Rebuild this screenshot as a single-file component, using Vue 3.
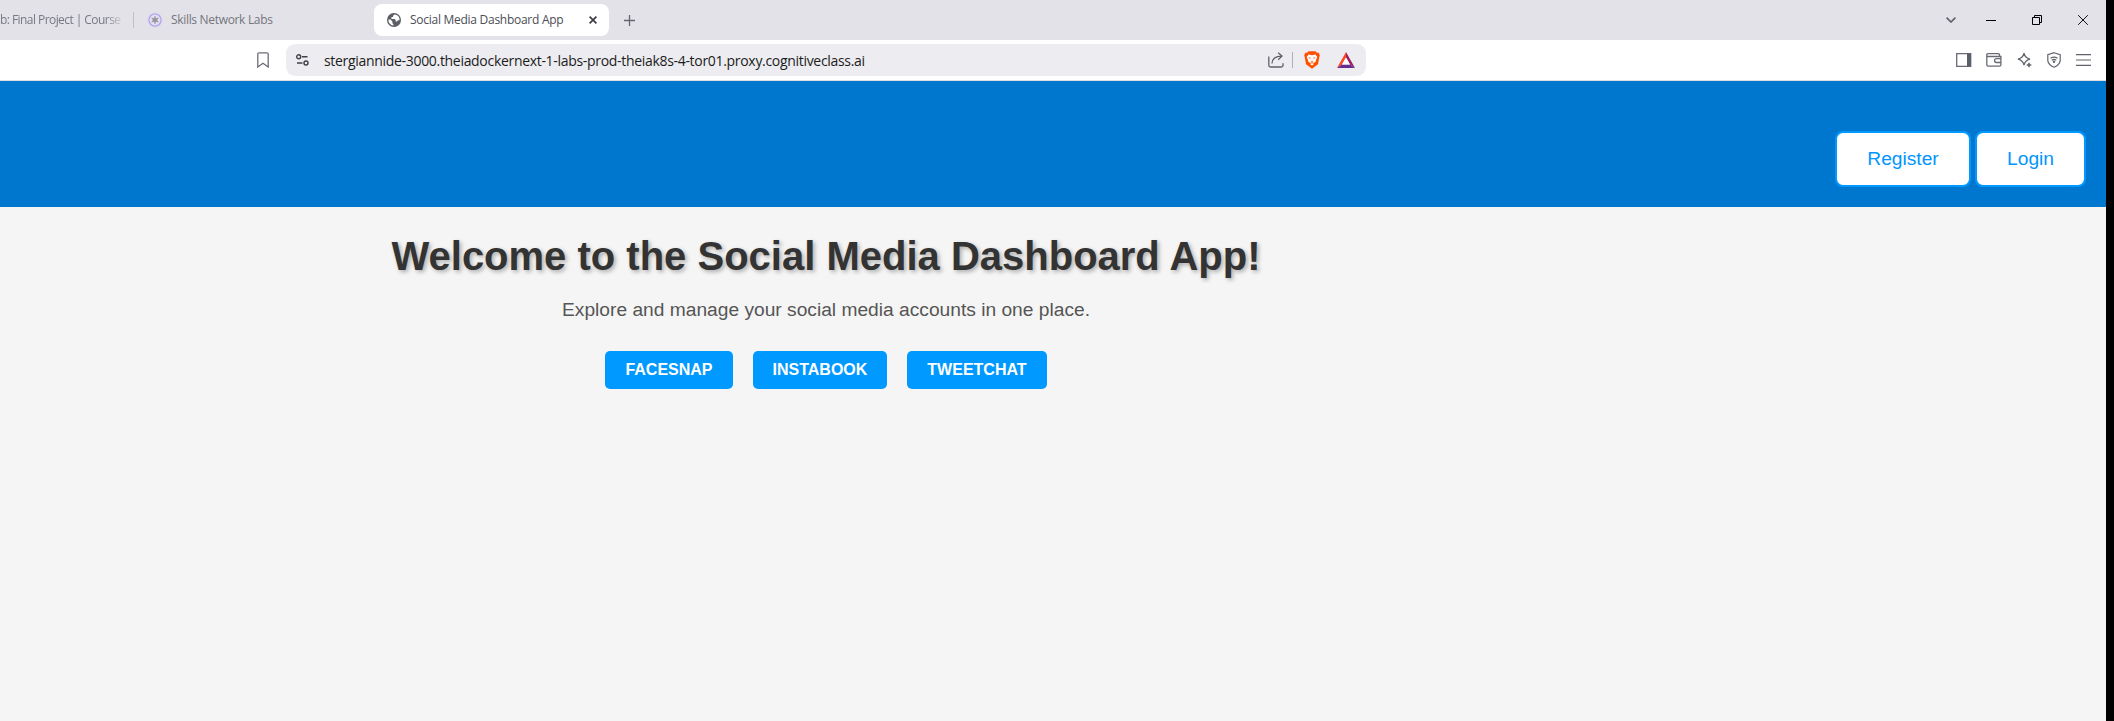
<script setup>
const accounts = ['FACESNAP', 'INSTABOOK', 'TWEETCHAT']
const auth = ['Register', 'Login']
</script>

<template>
  <div class="window">
    <div class="tabs">
      <div class="tab first"><span class="faded">b: Final Project | Course</span></div>
      <i class="tab-divider"></i>
      <div class="tab second">
        <svg width="16" height="16" viewBox="0 0 16 16" fill="none">
          <circle cx="8" cy="8" r="7.5" fill="#d9d2f2" />
          <circle cx="8" cy="8" r="6" fill="#e6e2f3" stroke="#b0a3e8" stroke-width="1.1" />
          <path d="M8 4v8M4.600 6l6.800 4M11.400 6l-6.800 4" stroke="#96939f" stroke-width="1.100" />
          <circle cx="8" cy="8" r="2" stroke="#96939f" />
        </svg>
        <span class="label muted">Skills Network Labs</span>
      </div>
      <div class="tab active">
        <svg width="14" height="14" viewBox="0 0 14 14">
          <circle cx="7" cy="7" r="7" fill="#5b5e66" />
          <path d="M7.600 1.400 6.200 2.500v1.300l-1.800.5v1.600h3.200l1 1.200v1.300h1.500l.8-1.100h1.600c.5-2.600-1.300-5.600-4.900-5.900z" fill="#fff" />
          <path d="M1.500 6.400c-.3 3 2 5.700 4.900 6.100V11l-1-.8V8.500L3.500 6.400z" fill="#fff" />
        </svg>
        <span class="label">Social Media Dashboard App</span>
        <svg class="close" width="8" height="8" viewBox="0 0 8 8"><path d="M.6.6l6.800 6.800M7.400.6.6 7.400" stroke="#3b3d43" stroke-width="1.700" /></svg>
      </div>
      <svg class="plus" width="11" height="11" viewBox="0 0 11 11"><path d="M5.500 0v11M0 5.500h11" stroke="#65676e" stroke-width="1.300" /></svg>
      <div class="controls">
        <svg width="10" height="6" viewBox="0 0 10 6" fill="none"><path d="M.6.6 5 5 9.400.6" stroke="#5d6067" stroke-width="1.600" /></svg>
        <svg width="10" height="11" viewBox="0 0 10 11"><path d="M0 5.500h10" stroke="#000" /></svg>
        <svg width="10" height="10" viewBox="0 0 10 10" fill="none" stroke="#000"><path d="M.5 2.500h7v7h-7zM2.500 2.500v-2h7v7h-2" /></svg>
        <svg width="10" height="10" viewBox="0 0 10 10"><path d="M.2.2l9.600 9.600M9.800.2.2 9.800" stroke="#111" /></svg>
      </div>
    </div>

    <div class="toolbar">
      <svg class="bookmark" width="12" height="16" viewBox="0 0 12 16" fill="none"><path d="M2 .8h8Q11.200.8 11.200 2v13L6 11.200.8 15V2Q.8.8 2 .8z" stroke="#6b6e76" stroke-width="1.300" /></svg>
      <div class="address">
        <svg class="tune" width="13" height="12" viewBox="0 0 13 12" fill="none" stroke="#3f4148" stroke-width="1.400">
          <circle cx="2.700" cy="2.800" r="2" /><path d="M6 2.800h5.500M1 9h5.500" /><circle cx="10" cy="9" r="2" />
        </svg>
        <span class="url">stergiannide-3000.theiadockernext-1-labs-prod-theiak8s-4-tor01.proxy.cognitiveclass.ai</span>
        <svg class="share" width="16" height="16" viewBox="0 0 16 16" fill="none" stroke="#5f6269" stroke-width="1.300">
          <path d="M.8 4.500v8.700Q.8 15 2.500 15h10.700q1.800 0 1.800-1.500v-2.200M4 11.500c.2-4.800 3-7.300 9.500-7.400M10.200.7l3.800 3.400-3.800 3.600" />
        </svg>
        <i class="address-divider"></i>
        <svg class="lion" width="16" height="18" viewBox="0 0 16 18">
          <path d="M4.500.3h7l1.500 1.500 1.800-.1 1 2.800-.5 1.600-1.300 7.100L8 17.800 2 13.200.7 6.100.2 4.500l1-2.800 1.800.1z" fill="#ff5000" />
          <path d="M4.600 3.500 8 4.200l3.400-.7 1.900 2.500-1.600 3.400.1 1.200-1.900 1.400L8 11.300 6.100 12l-1.900-1.400.1-1.200L2.700 6zM6 13l2-1 2 1-2 1.600z" fill="#fff" />
          <path d="M4.400 6.400l2.400.4v.8L5.300 7.600zM11.600 6.400l-2.400.4v.8l1.500 0zM6.500 9.400 8 10.400l1.500-1-.3 1.200L8 11.200l-1.200-.6z" fill="#ff5000" />
        </svg>
        <svg class="bat" width="18" height="16" viewBox="0 0 18 16">
          <path d="M9 0 0 16l5-3.400L9 5.600z" fill="#ff4724" /><path d="M9 0l9 16-5-3.400L9 5.600z" fill="#9e1f63" /><path d="M0 16h18l-5-3.400H5z" fill="#662d91" /><path d="M9 5.600l4 7H5z" fill="#fff" />
        </svg>
      </div>
      <div class="actions">
        <svg width="16" height="14" viewBox="0 0 16 14"><path d="M.7.7h14v12.600H.7z" fill="none" stroke="#686b73" stroke-width="1.300" /><path d="M11 .5h4v13h-4z" fill="#5b5f68" /></svg>
        <svg width="16" height="14" viewBox="0 0 16 14" fill="none" stroke="#686b73" stroke-width="1.300"><path d="M13.500 3.300V1.800Q13.500.7 12.300.7H2Q.8.7.8 2v9.800q0 1.400 1.500 1.400h11q1.600 0 1.600-1.400V3.500H1M15 5.600h-4.300Q8.500 5.600 8.500 7.500t2.200 2H15" /></svg>
        <svg width="16" height="16" viewBox="0 0 16 16" fill="none" stroke="#5f6269" stroke-width="1.200"><path d="M7 1.200Q7.900 6 13 7.200 8.100 8.300 7 13.200 5.900 8.300 1 7.200 6.100 6 7 1.200z" /><path d="M12 10.700v4.600M9.700 13h4.600" stroke-width="1.500" /></svg>
        <svg width="14" height="16" viewBox="0 0 14 16" fill="none" stroke="#62656d" stroke-width="1.200"><path d="M7 .7 13.200 2.600v6q-.5 4.200-6.200 6.600Q1.300 12.800.8 8.600v-6zM3.600 6.300q3.400-2.500 6.800 0M4.800 8.200q2.200-1.600 4.400 0" /><circle cx="7" cy="9.700" r=".6" /></svg>
        <svg width="15" height="12" viewBox="0 0 15 12"><path d="M0 .7h15M0 6h15M0 11.300h15" stroke="#5f6269" stroke-width="1.200" /></svg>
      </div>
    </div>

    <header class="banner">
      <button v-for="item in auth" :key="item" class="auth">{{ item }}</button>
    </header>

    <main>
      <h1>Welcome to the Social Media Dashboard App!</h1>
      <p>Explore and manage your social media accounts in one place.</p>
      <div class="accounts">
        <a v-for="name in accounts" :key="name">{{ name }}</a>
      </div>
    </main>
  </div>
</template>

<style>
body { background: #000; }
</style>

<style scoped>
* { box-sizing: border-box; }
svg { display: block; flex: none; }
.window { width: 2106px; height: 721px; background: #f5f5f5; overflow: hidden; font-family: "Liberation Sans", Arial, sans-serif; }
.tabs { display: flex; align-items: center; height: 40px; background: #e3e2e8; font: 12px "Open Sans", sans-serif; }
.tab { display: flex; align-items: center; white-space: nowrap; }
.first { width: 133px; }
.faded { width: 126px; padding-bottom: 2px; color: #777980; letter-spacing: -.56px; -webkit-mask-image: linear-gradient(90deg, #000 84%, transparent 99%); mask-image: linear-gradient(90deg, #000 84%, transparent 99%); }
.tab-divider { width: 1px; height: 16px; background: #c0c0c6; }
.second { width: 240px; padding-left: 13px; }
.second .label { margin-left: 8px; }
.label { padding-bottom: 2px; letter-spacing: -.27px; color: #4b4d54; }
.muted { letter-spacing: -.32px; color: #74767d; }
.active { width: 235px; height: 32px; padding-left: 13px; border-radius: 8px; background: #fff; }
.active .label { width: 178px; margin-left: 9px; }
.close { margin-left: 1px; }
.plus { margin-left: 15px; }
.controls { display: flex; align-items: center; gap: 36px; margin-left: auto; margin-right: 18px; }
.controls svg:first-child { margin-right: -6px; }
.toolbar { display: flex; align-items: center; height: 41px; background: #fff; border-bottom: 1px solid #dedee2; }
.bookmark { margin-left: 257px; }
.address { display: flex; align-items: center; width: 1080px; height: 32px; margin-left: 17px; padding-left: 10px; border-radius: 9px; background: #edecf1; }
.url { width: 940px; margin-left: 15px; margin-right: 5px; font: 14px "Open Sans", sans-serif; letter-spacing: -.31px; color: #1b1c20; white-space: nowrap; }
.share { margin-left: -1px; }
.address-divider { width: 1px; height: 16px; margin-left: 8px; background: #b0b0b8; }
.lion { margin-left: 11px; }
.bat { margin-left: 17px; }
.actions { display: flex; align-items: center; gap: 14.5px; margin-left: auto; margin-right: 15px; }
.actions svg:nth-child(n+2):nth-child(-n+4) { margin-left: -.5px; margin-right: .5px; }
.banner { display: flex; justify-content: flex-end; align-items: flex-end; gap: 4px; height: 126px; padding: 0 20px 20px 0; background: #0077cf; }
.auth { height: 56px; padding: 0 30px; border: 2px solid #0099ff; border-radius: 8px; background: #fff; color: #0095ff; font: 19.2px "Liberation Sans", Arial, sans-serif; }
.auth:first-child { width: 136px; }
main { display: flex; flex-direction: column; align-items: center; width: 1652px; padding-top: 26px; }
h1 { margin: 0; line-height: 46px; font-size: 40px; color: #333; text-shadow: 2px 2px 4px rgba(0, 0, 0, .3); white-space: nowrap; }
p { margin: 20px 0 0; line-height: 22px; font-size: 19.2px; color: #555; white-space: nowrap; }
.accounts { display: flex; gap: 20px; margin-top: 30px; }
.accounts a { padding: 10px 20px; border-radius: 5px; background: #0099ff; color: #fff; font-size: 16px; line-height: 18px; font-weight: bold; }
</style>
